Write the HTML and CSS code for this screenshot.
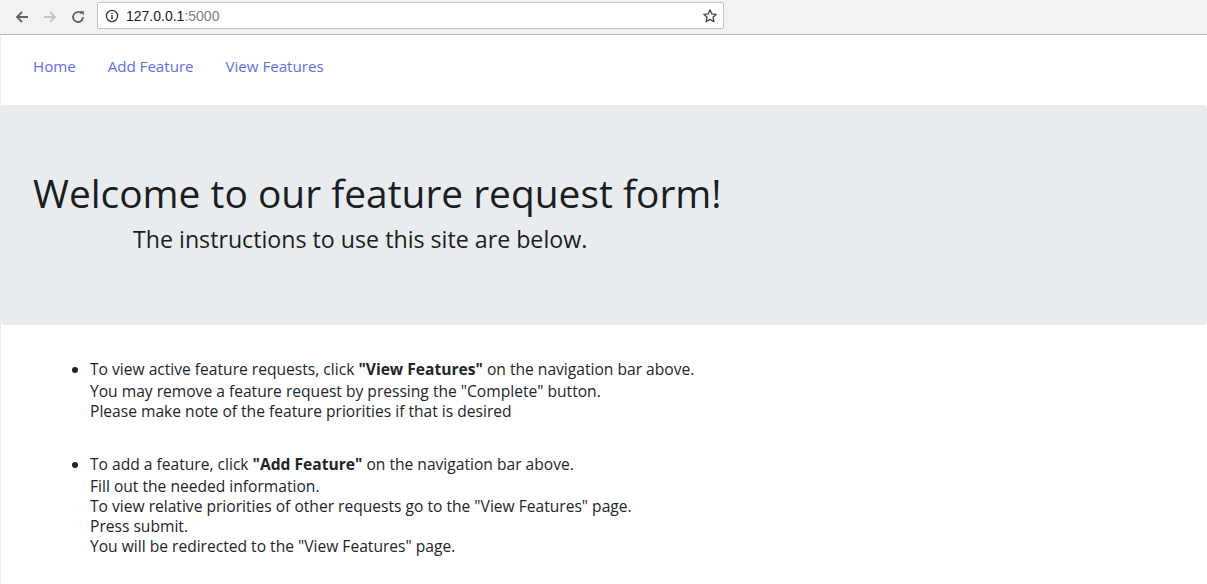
FILE: index.html
```html
<!DOCTYPE html>
<html>
<head>
<meta charset="utf-8">
<link rel="stylesheet" href="styles.css">
</head>
<body>
<div class="chrome">
  <div class="btns">
    <svg class="ic" width="16" height="16" viewBox="0 0 16 16"><path d="M14 8H3.5M8 3L3 8l5 5" fill="none" stroke="#5f6368" stroke-width="1.8"/></svg>
    <svg class="ic" width="16" height="16" viewBox="0 0 16 16"><path d="M2 8h10.5M8 3l5 5-5 5" fill="none" stroke="#c4c4c4" stroke-width="1.8"/></svg>
    <svg class="ic" width="16" height="16" viewBox="0 0 16 16"><path d="M13 8a5 5 0 1 1-1.6-3.7" fill="none" stroke="#5f6368" stroke-width="1.8"/><path d="M9.5 2.2h4.3v4.3z" fill="#5f6368"/></svg>
  </div>
  <div class="omnibox">
    <svg class="info" width="14" height="14" viewBox="0 0 14 14"><circle cx="7" cy="7" r="5.6" fill="none" stroke="#333" stroke-width="1.3"/><rect x="6.3" y="6" width="1.4" height="4" fill="#333"/><rect x="6.3" y="3.8" width="1.4" height="1.4" fill="#333"/></svg>
    <span class="host">127.0.0.1</span><span class="port">:5000</span>
    <svg class="star" width="16" height="16" viewBox="0 0 16 16"><path d="M8 1.8l1.9 4.1 4.4.4-3.3 3 1 4.4L8 11.4l-3.9 2.3 1-4.4-3.3-3 4.4-.4z" fill="none" stroke="#444" stroke-width="1.3" stroke-linejoin="round"/></svg>
  </div>
</div>
<div class="page">
  <nav class="navbar">
    <a class="nav-link" href="#">Home</a>
    <a class="nav-link" href="#">Add Feature</a>
    <a class="nav-link" href="#">View Features</a>
  </nav>
  <div class="jumbotron">
    <h1 class="title">Welcome to our feature request form!</h1>
    <h4 class="subtitle">The instructions to use this site are below.</h4>
  </div>
  <ul class="steps">
    <li class="step">
      <div class="lead-line">To view active feature requests, click <b>"View Features"</b> on the navigation bar above.</div>
      <div class="rest">You may remove a feature request by pressing the "Complete" button.<br>Please make note of the feature priorities if that is desired</div>
    </li>
    <li class="step">
      <div class="lead-line">To add a feature, click <b>"Add Feature"</b> on the navigation bar above.</div>
      <div class="rest">Fill out the needed information.<br>To view relative priorities of other requests go to the "View Features" page.<br>Press submit.<br>You will be redirected to the "View Features" page.</div>
    </li>
  </ul>
</div>
</body>
</html>
```

FILE: styles.css
```css
html, body {
  margin: 0;
  padding: 0;
  background: #fff;
}
body {
  font-family: "Open Sans", "Noto Sans", sans-serif;
  color: #212529;
  overflow: hidden;
  height: 584px;
}
.chrome {
  height: 34px;
  background: #f2f2f2;
  border-bottom: 1px solid #b6b6b6;
  display: flex;
  align-items: center;
}
.btns {
  display: flex;
  gap: 12px;
  padding-left: 14px;
  width: 83px;
}
.ic { display: block; }
.omnibox {
  width: 625px;
  height: 25px;
  margin-top: -3px;
  background: #fff;
  border: 1px solid #c3c3c3;
  border-radius: 2px;
  display: flex;
  align-items: center;
  font-family: "Liberation Sans", Arial, sans-serif;
  font-size: 14px;
  box-sizing: content-box;
}
.info { margin-left: 7px; margin-right: 7px; }
.host { color: #222; }
.port { color: #808080; }
.star { margin-left: auto; margin-right: 5px; }
.page {
  border-left: 1px solid #ececec;
  height: 549px;
}
.navbar {
  height: 70px;
  display: flex;
  align-items: center;
  padding: 0 16px;
  box-sizing: border-box;
}
.nav-link {
  color: #5f6cf4;
  text-decoration: none;
  font-size: 15.1px;
  padding: 0 16px;
  line-height: 24px;
  margin-top: -9px;
}
.jumbotron {
  background: #e9ecef;
  border-radius: 4px;
  padding: 64px 32px;
  height: 220px;
  box-sizing: border-box;
  margin-bottom: 32px;
}
.title {
  margin: 0 0 8px;
  font-size: 38.9px;
  font-weight: 500;
  line-height: 48px;
  color: #1b1e21;
}
.subtitle {
  margin: 0;
  padding-left: 100px;
  font-size: 23.2px;
  font-weight: 500;
  line-height: 28px;
  color: #1b1e21;
}
.steps {
  margin: 0 0 0 50px;
  padding-left: 39px;
  font-size: 15.6px;
}
.step { margin-bottom: 31px; }
.lead-line { line-height: 24px; }
.lead-line b { font-weight: 700; }
.rest { line-height: 20px; }
```
